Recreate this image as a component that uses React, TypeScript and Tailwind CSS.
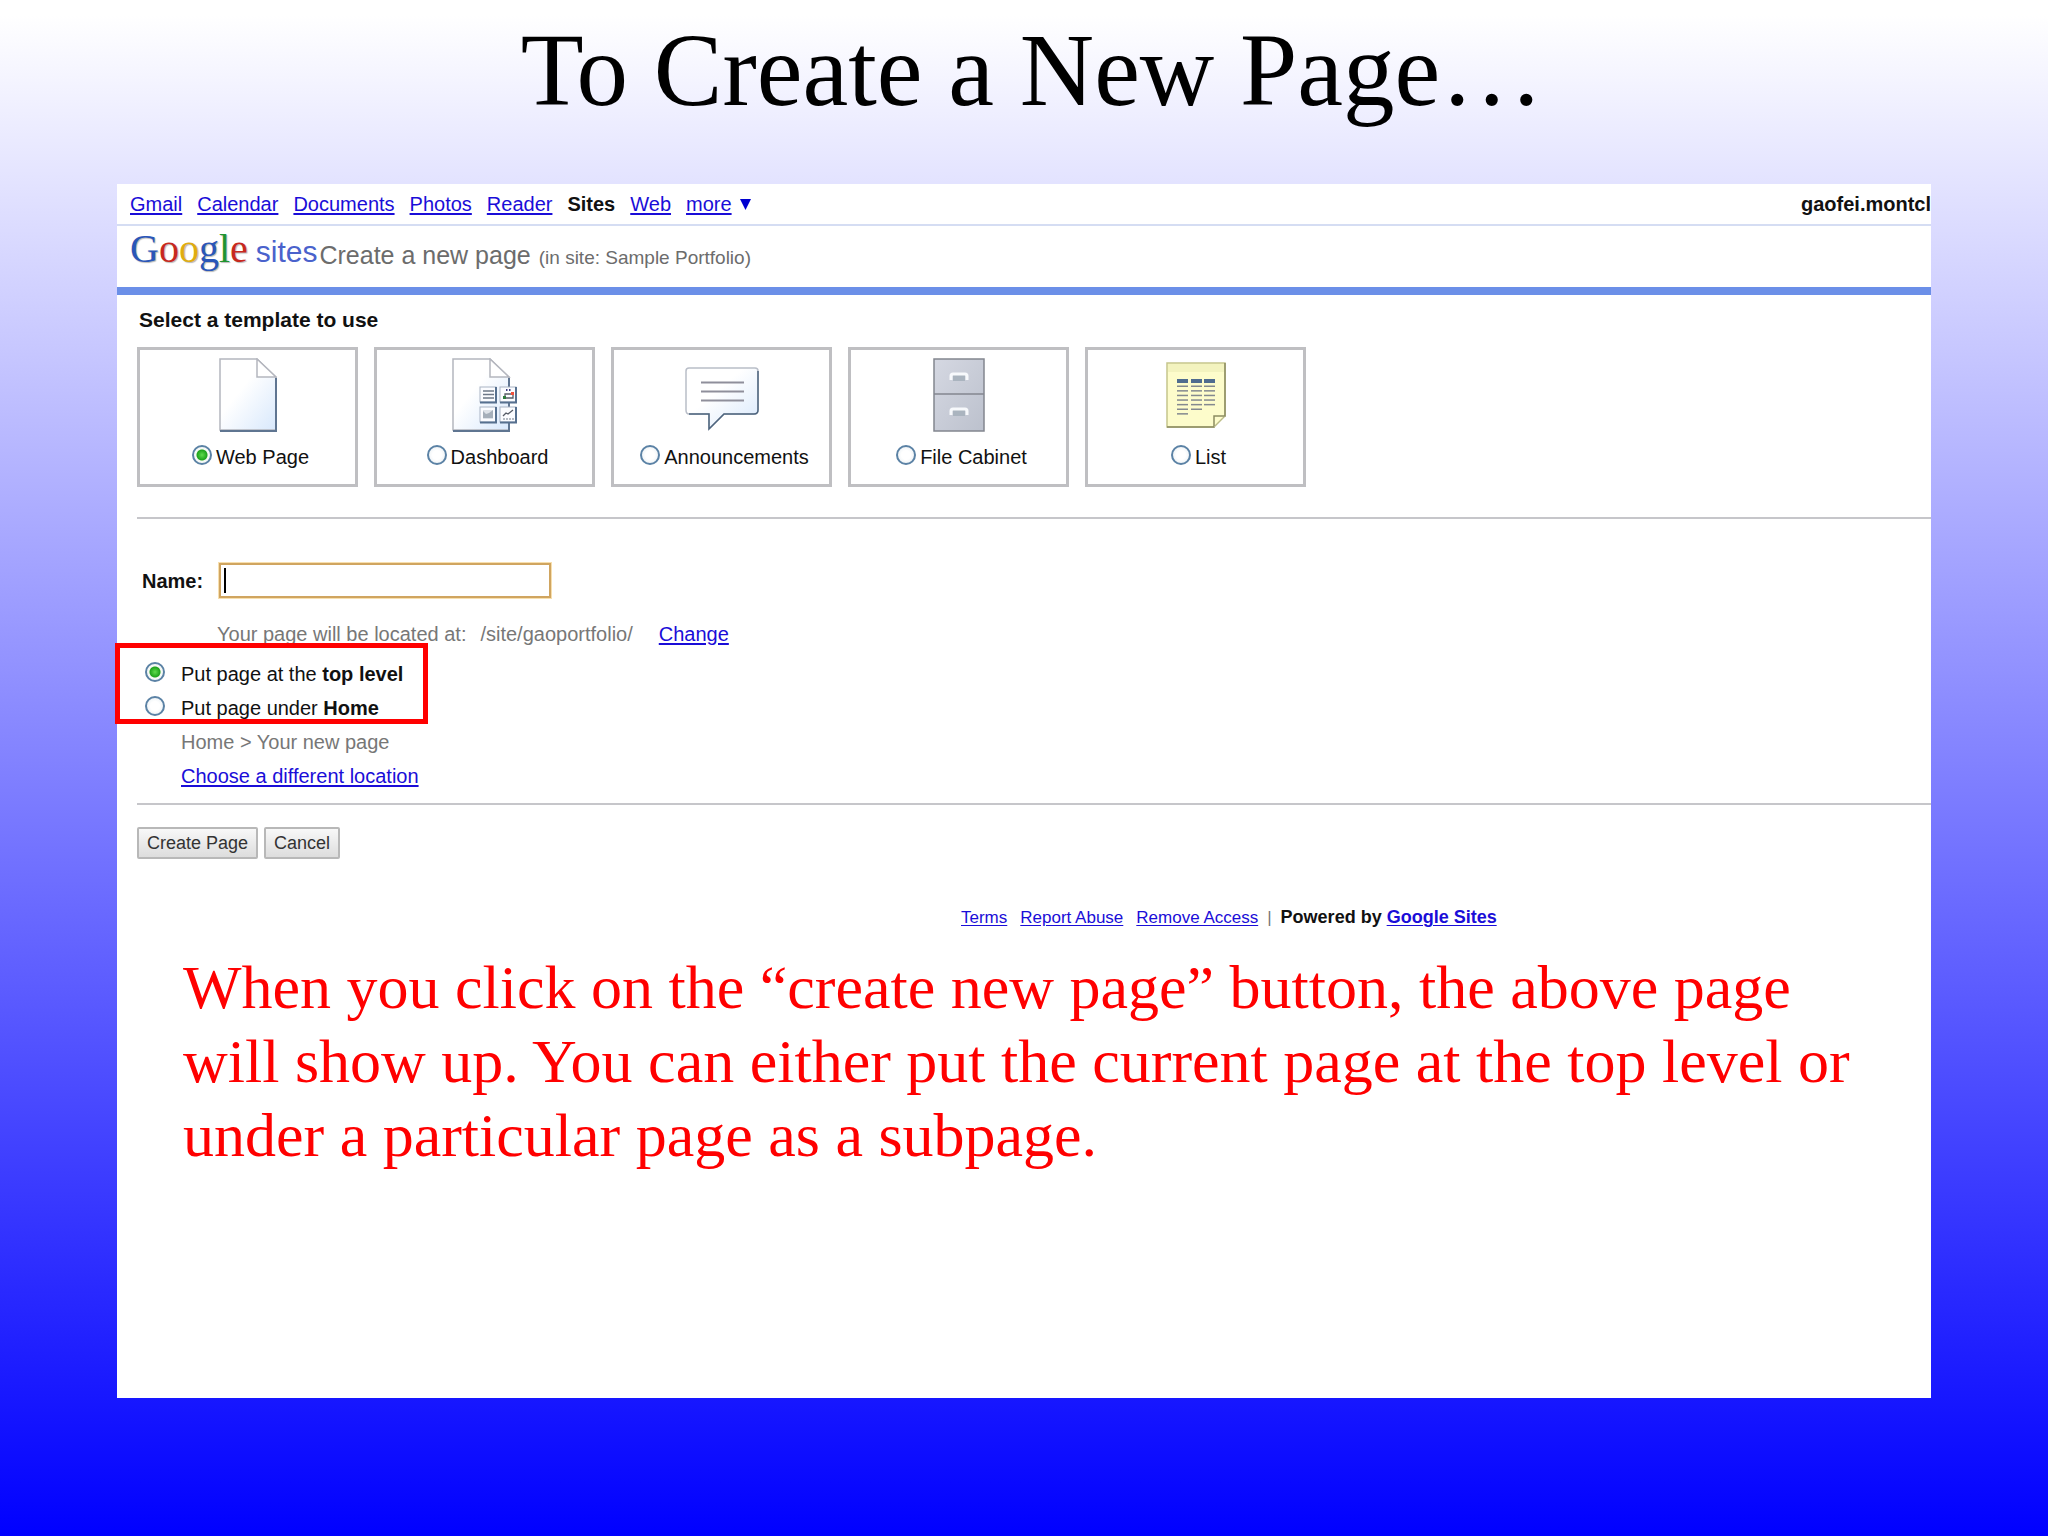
import { useState, type ReactNode } from "react";

type Template = {
    id: string;
    label: string;
    icon: ReactNode;
};

const navBefore = ["Gmail", "Calendar", "Documents", "Photos", "Reader"];

const linkClass = "text-[#1a0dd8] underline underline-offset-2";

const radioClass =
    "size-5 shrink-0 appearance-none rounded-full border-2 border-[#5b82a5] bg-[radial-gradient(circle,#ffffff_40%,#e3ebf0_100%)] checked:bg-[radial-gradient(circle,#5fdc4c_0%,#1fa31c_5px,#f4f8f4_6px,#ffffff_100%)]";

const buttonClass =
    "h-8 rounded-[2px] border-2 border-[#b8b8b8] bg-linear-to-b from-[#f8f8f8] to-[#dddddd] px-2 text-[18px] leading-6 text-[#333333]";

function PageShape() {
    return (
        <>
            <path d="M1 1H38L57 19V72H1Z" fill="url(#paper)" stroke="#b4b6be" strokeWidth="1.5" />
            <path d="M38 1V19H57Z" fill="#ffffff" stroke="#b4b6be" strokeWidth="1.5" />
            <path d="M57 20V73H1" fill="none" stroke="#5f7591" strokeWidth="2" />
        </>
    );
}

function WebPageIcon() {
    return (
        <svg width="58" height="75" viewBox="0 0 58 75" aria-hidden="true">
            <PageShape />
        </svg>
    );
}

function DashboardIcon() {
    return (
        <svg width="66" height="75" viewBox="0 0 66 75" aria-hidden="true">
            <PageShape />
            {[[28, 29], [48, 29], [28, 49], [48, 49]].map(([x, y]) => (
                <g key={`${x}-${y}`}>
                    <rect x={x} y={y} width="16" height="15" fill="#fbfcff" stroke="#aab4c4" />
                    <path d={`M${x + 16} ${y}v15.5h-16`} fill="none" stroke="#56708f" strokeWidth="2" />
                </g>
            ))}
            <path d="M31 33h11M31 36.500h11M31 40h11" stroke="#6d7888" strokeWidth="1.300" />
            <path d="M54 32h1.500M57 32h1.500" stroke="#3c3c80" strokeWidth="2" />
            <path d="M53 36h8v4h-8z" fill="none" stroke="#555b66" strokeWidth="1.300" />
            <rect x="59" y="34" width="3" height="3" fill="#f0503c" />
            <rect x="51" y="38" width="3" height="3" fill="#2d7a3c" />
            <rect x="31" y="52" width="10" height="9" fill="#dde2e8" />
            <path d="M31 60v-7l3 3 3-1 4-3v8z" fill="#a5afba" />
            <path d="M51 58l3-3 2 1 5-4" fill="none" stroke="#555b66" strokeWidth="1.300" />
            <path d="M51 61h11" stroke="#b5bbc4" strokeWidth="2" strokeDasharray="2 1" />
        </svg>
    );
}

function AnnouncementsIcon() {
    return (
        <svg width="74" height="75" viewBox="0 0 74 75" aria-hidden="true">
            <path
                d="M4 10H70Q73 10 73 13V52Q73 56 69 56H39L24 71V56H4Q1 56 1 52V13Q1 10 4 10Z"
                fill="url(#paper)"
                stroke="#b9bec8"
                strokeWidth="1.500"
            />
            <path d="M73 13V52Q73 56 69 56H39L24 71V56H4" fill="none" stroke="#4e657f" strokeWidth="1.500" />
            <path d="M16 24.500H59M16 33.500H59M16 42.500H59" stroke="#8f8f9b" strokeWidth="2" />
        </svg>
    );
}

function FileCabinetIcon() {
    return (
        <svg width="52" height="75" viewBox="0 0 52 75" aria-hidden="true">
            <rect x="1" y="1" width="50" height="72" fill="url(#steel)" stroke="#83868f" strokeWidth="1.500" />
            <path d="M1 36H51" stroke="#83868f" strokeWidth="1.500" />
            {[14, 49].map((y) => (
                <g key={y}>
                    <rect x="20" y={y + 3} width="12" height="6" fill="#aab4bf" />
                    <path d={`M18 ${y + 8}v-4q0-2 2-2h12q2 0 2 2v4`} fill="none" stroke="#f7f9fc" strokeWidth="3" />
                </g>
            ))}
        </svg>
    );
}

function ListIcon() {
    const columns = [
        { x: 11, rows: 7 },
        { x: 25, rows: 6 },
        { x: 38, rows: 5 },
    ];
    return (
        <svg width="60" height="75" viewBox="0 0 60 75" aria-hidden="true">
            <path d="M1 5H59V58L48 69H1Z" fill="#fdfccb" stroke="#c5c58c" strokeWidth="1.500" />
            <path d="M2 6H58V14H2Z" fill="#f3f3bf" />
            <path d="M59 5V58H48V69H1" fill="none" stroke="#8c8c62" strokeWidth="1.500" />
            <path d="M48 69L59 58" stroke="#b5b58a" strokeDasharray="2 1" />
            {columns.map((column) => (
                <g key={column.x}>
                    <rect x={column.x} y="21" width="11" height="4" fill="#4f6c8f" />
                    {Array.from({ length: column.rows }, (_, row) => (
                        <rect key={row} x={column.x} y={27.5 + row * 4.6} width="11" height="1.5" fill="#84898f" />
                    ))}
                </g>
            ))}
        </svg>
    );
}

const templates: Template[] = [
    { id: "web-page", label: "Web Page", icon: <WebPageIcon /> },
    { id: "dashboard", label: "Dashboard", icon: <DashboardIcon /> },
    { id: "announcements", label: "Announcements", icon: <AnnouncementsIcon /> },
    { id: "file-cabinet", label: "File Cabinet", icon: <FileCabinetIcon /> },
    { id: "list", label: "List", icon: <ListIcon /> },
];

function TopNav() {
    return (
        <nav className="flex justify-between border-b-2 border-[#d5ddf3] py-2 pl-[13px]">
            <div className="flex gap-[15px]">
                {navBefore.map((item) => (
                    <a key={item} href="#" className={linkClass}>{item}</a>
                ))}
                <b>Sites</b>
                <a href="#" className={linkClass}>Web</a>
                <a href="#" className="flex gap-2 text-[#1a0dd8]">
                    <span className="underline underline-offset-2">more</span>
                    <svg width="11" height="24" viewBox="0 0 11 24" aria-hidden="true">
                        <path d="M0 7H11L5.500 18Z" fill="#0000d0" />
                    </svg>
                </a>
            </div>
            <b>gaofei.montcl</b>
        </nav>
    );
}

function Logo() {
    return (
        <div className="flex items-baseline gap-2 leading-[46px]">
            <span className="font-['Liberation_Serif',serif] text-[40px] [text-shadow:1px_1px_1px_#b8b8b8]">
                <span className="text-[#2a56b8]">G</span>
                <span className="text-[#c8281e]">o</span>
                <span className="text-[#e0ac10]">o</span>
                <span className="text-[#2a56b8]">g</span>
                <span className="text-[#1f9430]">l</span>
                <span className="text-[#c8281e]">e</span>
            </span>
            <span className="text-[30px] text-[#4a62cc]">sites</span>
        </div>
    );
}

export default function App() {
    const [template, setTemplate] = useState("web-page");
    const [location, setLocation] = useState("top");
    const [name, setName] = useState("");

    return (
        <div className="flex min-h-screen flex-col bg-linear-to-b/srgb from-white from-1% to-[#0000ff] px-[117px] pb-[138px]">
            <svg width="0" height="0" className="absolute" aria-hidden="true">
                <defs>
                    <linearGradient id="paper" x1="0" y1="0" x2="1" y2="1">
                        <stop offset="0.4" stopColor="#ffffff" />
                        <stop offset="1" stopColor="#d8e8fc" />
                    </linearGradient>
                    <linearGradient id="steel" x1="0" y1="0" x2="1" y2="1">
                        <stop offset="0" stopColor="#d5d8e2" />
                        <stop offset="1" stopColor="#bcc1cd" />
                    </linearGradient>
                </defs>
            </svg>

            <h1 className="pt-[14px] pb-[58px] pl-4 text-center font-['Liberation_Serif',serif] text-[103px] leading-[112px] text-black">
                To Create a New Page…
            </h1>

            <main className="flex-1 bg-white font-['Liberation_Sans',sans-serif] text-[20px] leading-6 text-[#111111]">
                <TopNav />
                <header className="flex h-[69px] border-b-8 border-[#6b8fe8] pl-[13px]">
                    <Logo />
                    <h2 className="flex items-baseline gap-2 pt-[7px] pl-[2px] text-[25px] leading-11 text-[#6c6c6c]">
                        Create a new page
                        <span className="text-[19px]">(in site: Sample Portfolio)</span>
                    </h2>
                </header>

                <form className="pt-[13px] pl-5" onSubmit={(event) => event.preventDefault()}>
                    <h3 className="pl-[2px] text-[21px] font-bold">Select a template to use</h3>
                    <div className="mt-[15px] flex gap-4">
                        {templates.map((item) => (
                            <label
                                key={item.id}
                                className="flex h-[140px] w-[221px] flex-col items-center border-3 border-[#bfbfc2] pt-2"
                            >
                                {item.icon}
                                <span className="mt-3 flex gap-1 pl-[6px]">
                                    <input
                                        type="radio"
                                        name="template"
                                        className={radioClass}
                                        checked={template === item.id}
                                        onChange={() => setTemplate(item.id)}
                                    />
                                    {item.label}
                                </span>
                            </label>
                        ))}
                    </div>

                    <hr className="mt-[30px] border-t-2 border-[#c6c6ca]" />

                    <div className="mt-11 flex items-center gap-4 pl-[5px]">
                        <label htmlFor="page-name" className="font-bold">Name:</label>
                        <div className="relative">
                            <input
                                id="page-name"
                                type="text"
                                value={name}
                                onChange={(event) => setName(event.target.value)}
                                className="block h-[35px] w-[332px] border-2 border-[#d0a560] bg-white px-1 outline-1 outline-[#f7dfae]"
                            />
                            <span className="absolute top-[5px] left-[5px] h-[25px] w-[2px] bg-black" />
                        </div>
                    </div>

                    <p className="mt-6 flex pl-20 text-[#777777]">
                        Your page will be located at:
                        <span className="ml-[14px]">/site/gaoportfolio/</span>
                        <a href="#" className={`${linkClass} ml-[26px]`}>Change</a>
                    </p>

                    <div className="relative mt-4 flex flex-col gap-[10px]">
                        <label className="flex gap-4 pl-2">
                            <input
                                type="radio"
                                name="location"
                                className={radioClass}
                                checked={location === "top"}
                                onChange={() => setLocation("top")}
                            />
                            <span>Put page at the <b>top level</b></span>
                        </label>
                        <label className="flex gap-4 pl-2">
                            <input
                                type="radio"
                                name="location"
                                className={radioClass}
                                checked={location === "home"}
                                onChange={() => setLocation("home")}
                            />
                            <span>Put page under <b>Home</b></span>
                        </label>
                        {/* red highlight around the two location options */}
                        <div className="pointer-events-none absolute -top-[19px] -left-[22px] h-[81px] w-[313px] border-5 border-[#ff0000]" />
                        <p className="pl-11 text-[#777777]">Home &gt; Your new page</p>
                        <p className="pl-11"><a href="#" className={linkClass}>Choose a different location</a></p>
                    </div>

                    <hr className="mt-[15px] border-t-2 border-[#c6c6ca]" />

                    <div className="mt-[22px] flex gap-[6px]">
                        <button type="submit" className={buttonClass}>Create Page</button>
                        <button type="button" className={buttonClass}>Cancel</button>
                    </div>
                </form>

                <footer className="mt-[46px] flex items-baseline gap-[13px] pl-[844px] text-[17px]">
                    <a href="#" className={linkClass}>Terms</a>
                    <a href="#" className={linkClass}>Report Abuse</a>
                    <a href="#" className={linkClass}>Remove Access</a>
                    <span className="-mx-1 text-[#777777]">|</span>
                    <b className="text-[18px]">Powered by <a href="#" className={linkClass}>Google Sites</a></b>
                </footer>

                <p className="mt-5 pr-12 pl-[66px] font-['Liberation_Serif',serif] text-[62px] leading-[74px] text-[#ff0000]">
                    When you click on the “create new page” button, the above page will show up. You can either put the
                    current page at the top level or under a particular page as a subpage.
                </p>
            </main>
        </div>
    );
}
